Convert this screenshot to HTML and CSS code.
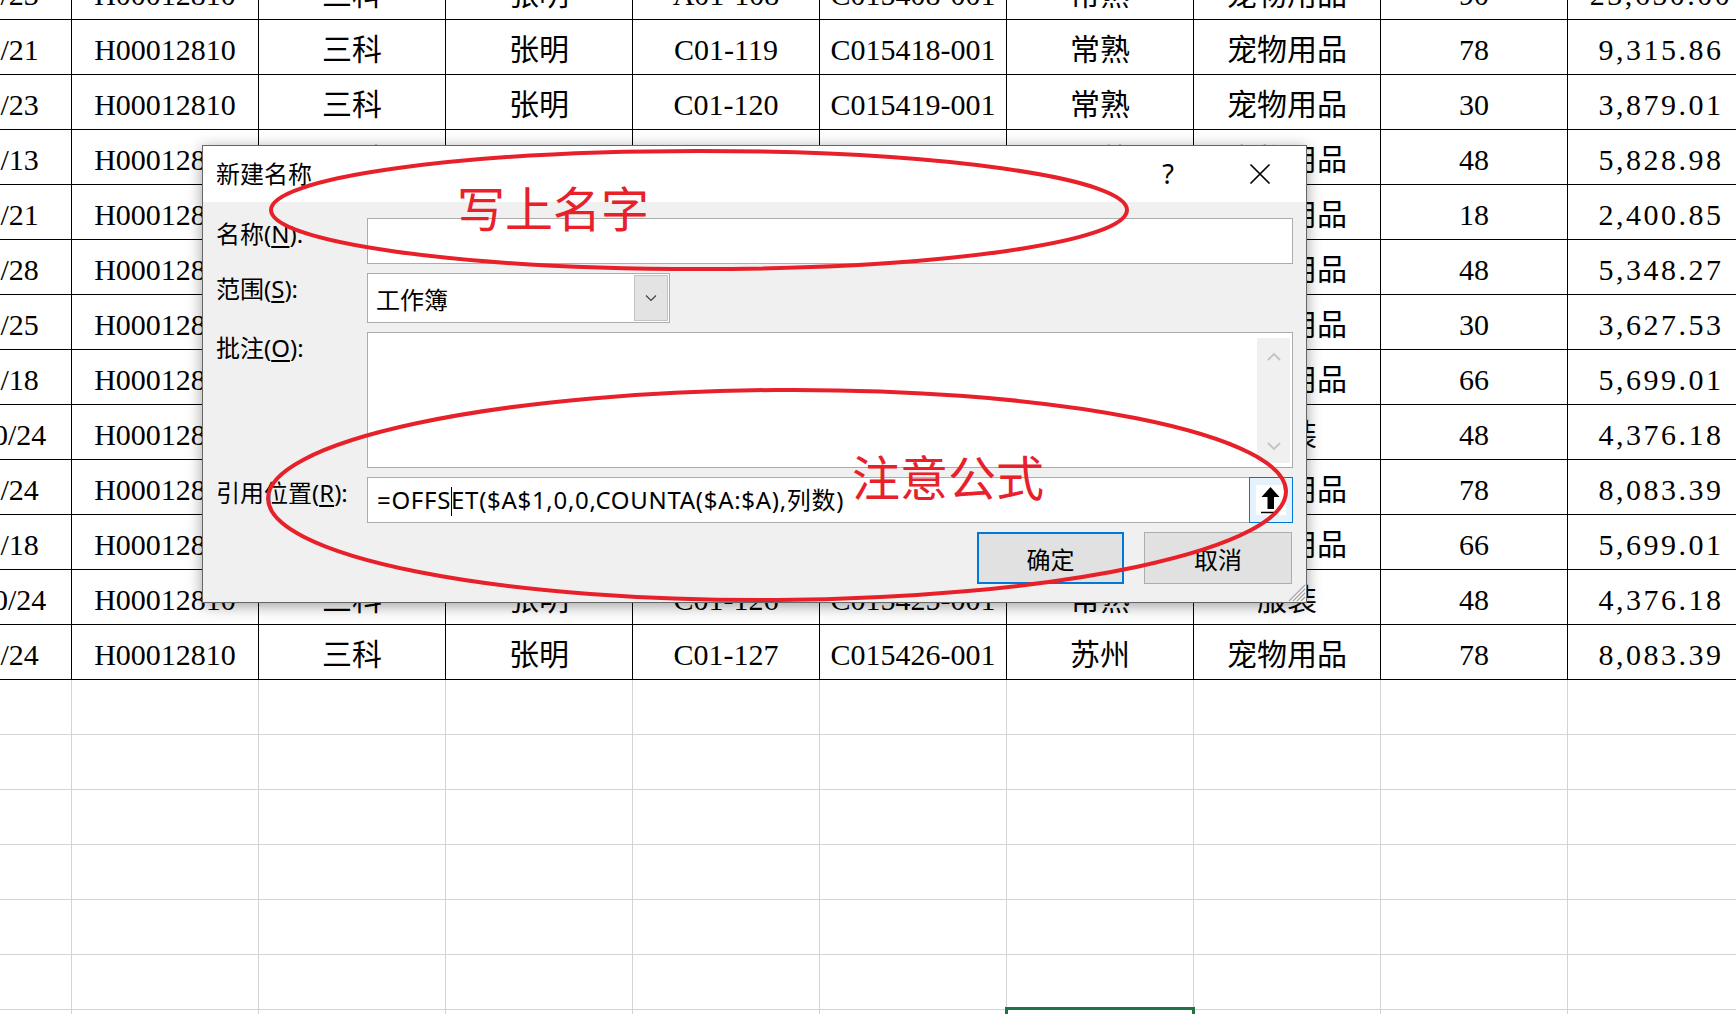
FILE: index.html
```html
<!DOCTYPE html>
<html lang="zh-CN">
<head>
<meta charset="utf-8">
<title>新建名称</title>
<link rel="stylesheet" href="styles.css">
</head>
<body>
<div class="sheet">
  <div class="row"><div class="c">2019/9/23</div><div class="c">H00012810</div><div class="c">三科</div><div class="c">张明</div><div class="c">A01-108</div><div class="c">C015408-001</div><div class="c">常熟</div><div class="c">宠物用品</div><div class="c">90</div><div class="c num">23,650.00</div></div>
  <div class="row"><div class="c">2019/9/21</div><div class="c">H00012810</div><div class="c">三科</div><div class="c">张明</div><div class="c">C01-119</div><div class="c">C015418-001</div><div class="c">常熟</div><div class="c">宠物用品</div><div class="c">78</div><div class="c num">9,315.86</div></div>
  <div class="row"><div class="c">2019/9/23</div><div class="c">H00012810</div><div class="c">三科</div><div class="c">张明</div><div class="c">C01-120</div><div class="c">C015419-001</div><div class="c">常熟</div><div class="c">宠物用品</div><div class="c">30</div><div class="c num">3,879.01</div></div>
  <div class="row"><div class="c">2019/9/13</div><div class="c">H00012810</div><div class="c">三科</div><div class="c">张明</div><div class="c">C01-121</div><div class="c">C015420-001</div><div class="c">常熟</div><div class="c">宠物用品</div><div class="c">48</div><div class="c num">5,828.98</div></div>
  <div class="row"><div class="c">2019/9/21</div><div class="c">H00012810</div><div class="c">三科</div><div class="c">张明</div><div class="c">C01-122</div><div class="c">C015421-001</div><div class="c">常熟</div><div class="c">宠物用品</div><div class="c">18</div><div class="c num">2,400.85</div></div>
  <div class="row"><div class="c">2019/9/28</div><div class="c">H00012810</div><div class="c">三科</div><div class="c">张明</div><div class="c">C01-123</div><div class="c">C015422-001</div><div class="c">常熟</div><div class="c">宠物用品</div><div class="c">48</div><div class="c num">5,348.27</div></div>
  <div class="row"><div class="c">2019/9/25</div><div class="c">H00012810</div><div class="c">三科</div><div class="c">张明</div><div class="c">C01-124</div><div class="c">C015423-001</div><div class="c">常熟</div><div class="c">宠物用品</div><div class="c">30</div><div class="c num">3,627.53</div></div>
  <div class="row"><div class="c">2019/9/18</div><div class="c">H00012810</div><div class="c">三科</div><div class="c">张明</div><div class="c">C01-125</div><div class="c">C015424-001</div><div class="c">常熟</div><div class="c">宠物用品</div><div class="c">66</div><div class="c num">5,699.01</div></div>
  <div class="row"><div class="c">2019/10/24</div><div class="c">H00012810</div><div class="c">三科</div><div class="c">张明</div><div class="c">C01-126</div><div class="c">C015425-001</div><div class="c">常熟</div><div class="c">服装</div><div class="c">48</div><div class="c num">4,376.18</div></div>
  <div class="row"><div class="c">2019/9/24</div><div class="c">H00012810</div><div class="c">三科</div><div class="c">张明</div><div class="c">C01-127</div><div class="c">C015426-001</div><div class="c">苏州</div><div class="c">宠物用品</div><div class="c">78</div><div class="c num">8,083.39</div></div>
  <div class="row"><div class="c">2019/9/18</div><div class="c">H00012810</div><div class="c">三科</div><div class="c">张明</div><div class="c">C01-125</div><div class="c">C015424-001</div><div class="c">常熟</div><div class="c">宠物用品</div><div class="c">66</div><div class="c num">5,699.01</div></div>
  <div class="row"><div class="c">2019/10/24</div><div class="c">H00012810</div><div class="c">三科</div><div class="c">张明</div><div class="c">C01-126</div><div class="c">C015425-001</div><div class="c">常熟</div><div class="c">服装</div><div class="c">48</div><div class="c num">4,376.18</div></div>
  <div class="row"><div class="c">2019/9/24</div><div class="c">H00012810</div><div class="c">三科</div><div class="c">张明</div><div class="c">C01-127</div><div class="c">C015426-001</div><div class="c">苏州</div><div class="c">宠物用品</div><div class="c">78</div><div class="c num">8,083.39</div></div>
  <div class="row empty"><div class="c"></div><div class="c"></div><div class="c"></div><div class="c"></div><div class="c"></div><div class="c"></div><div class="c"></div><div class="c"></div><div class="c"></div><div class="c"></div></div>
  <div class="row empty"><div class="c"></div><div class="c"></div><div class="c"></div><div class="c"></div><div class="c"></div><div class="c"></div><div class="c"></div><div class="c"></div><div class="c"></div><div class="c"></div></div>
  <div class="row empty"><div class="c"></div><div class="c"></div><div class="c"></div><div class="c"></div><div class="c"></div><div class="c"></div><div class="c"></div><div class="c"></div><div class="c"></div><div class="c"></div></div>
  <div class="row empty"><div class="c"></div><div class="c"></div><div class="c"></div><div class="c"></div><div class="c"></div><div class="c"></div><div class="c"></div><div class="c"></div><div class="c"></div><div class="c"></div></div>
  <div class="row empty"><div class="c"></div><div class="c"></div><div class="c"></div><div class="c"></div><div class="c"></div><div class="c"></div><div class="c"></div><div class="c"></div><div class="c"></div><div class="c"></div></div>
  <div class="row empty"><div class="c"></div><div class="c"></div><div class="c"></div><div class="c"></div><div class="c"></div><div class="c"></div><div class="c"></div><div class="c"></div><div class="c"></div><div class="c"></div></div>
  <div class="row empty last"><div class="c"></div><div class="c"></div><div class="c"></div><div class="c"></div><div class="c"></div><div class="c"></div><div class="c sel"></div><div class="c"></div><div class="c"></div><div class="c"></div></div>
</div>

<div class="dialog">
  <div class="titlebar">
    <div class="title">新建名称</div>
    <div class="tb-btn help">?</div>
    <div class="tb-btn close">
      <svg width="22" height="22" viewBox="0 0 22 22"><path d="M1.5 1.5 L20.5 20.5 M20.5 1.5 L1.5 20.5" stroke="#000" stroke-width="1.7" fill="none"/></svg>
    </div>
  </div>
  <div class="dbody">
    <div class="lbl">名称(<u>N</u>):</div>
    <div class="input"></div>
    <div class="lbl">范围(<u>S</u>):</div>
    <div class="combo">
      <div class="combo-text">工作簿</div>
      <div class="combo-btn"><svg width="12" height="8" viewBox="0 0 12 8"><path d="M1 1.5 L6 6.5 L11 1.5" stroke="#3c3c3c" stroke-width="1.1" fill="none"/></svg></div>
    </div>
    <div class="lbl">批注(<u>O</u>):</div>
    <div class="input memo">
      <div class="vscroll">
        <svg width="14" height="9" viewBox="0 0 14 9"><path d="M1 8 L7 2 L13 8" stroke="#c2c2c2" stroke-width="1.8" fill="none"/></svg>
        <svg width="14" height="9" viewBox="0 0 14 9"><path d="M1 1 L7 7 L13 1" stroke="#c2c2c2" stroke-width="1.8" fill="none"/></svg>
      </div>
    </div>
    <div class="lbl">引用位置(<u>R</u>):</div>
    <div class="input ref">
      <div class="ref-text"><span>=OFFS<i class="caret"></i>ET($A$1,0,0,COUNTA($A:$A),列数)</span></div>
      <div class="collapse">
        <div class="collapse-in">
          <svg width="30" height="30" viewBox="0 0 30 30"><path d="M5.5 12 L14.5 2 L23.5 12 L18 12 L18 24 L11.5 24 L11.5 12 Z" fill="#000"/><path d="M5 27.5 L21 27.5" stroke="#000" stroke-width="1.5"/></svg>
        </div>
      </div>
    </div>
    <div class="actions">
      <div class="btn ok">确定</div>
      <div class="btn">取消</div>
    </div>
  </div>
  <svg class="grip" width="20" height="20" viewBox="0 0 20 20">
    <path d="M19 3 L3 19 M19 7 L7 19 M19 11 L11 19 M19 15 L15 19" stroke="#a8a8a8" stroke-width="1.2"/>
    <path d="M20 4 L4 20 M20 8 L8 20 M20 12 L12 20 M20 16 L16 20" stroke="#ffffff" stroke-width="1"/>
  </svg>
</div>

<svg class="marks" width="1736" height="1014" viewBox="0 0 1736 1014">
  <ellipse cx="699" cy="210" rx="428" ry="59" fill="none" stroke="#e8202a" stroke-width="4"/>
  <ellipse cx="777" cy="495" rx="509" ry="105" fill="none" stroke="#e8202a" stroke-width="4" transform="rotate(-0.4 777 495)"/>
</svg>
<div class="note note1">写上名字</div>
<div class="note note2">注意公式</div>
</body>
</html>
```

FILE: styles.css
```css
* { box-sizing: border-box; }
html, body { margin: 0; padding: 0; overflow: hidden; }
body {
  width: 1736px;
  height: 1014px;
  background: #fff;
  position: relative;
  font-family: "Noto Sans", "Noto Sans CJK SC", sans-serif;
  color: #000;
}

/* spreadsheet */
.sheet {
  margin: -35px 0 0 -115px;
  height: 1049px;
  overflow: hidden;
  display: flex;
  flex-direction: column;
  font-family: "Liberation Serif", "Noto Sans CJK SC", serif;
  font-size: 30px;
}
.row {
  display: grid;
  grid-template-columns: repeat(10, 187px);
  height: 55px;
  flex: none;
}
.row.last { height: 14px; }
.c {
  border-right: 1px solid #000;
  border-bottom: 1px solid #000;
  display: flex;
  align-items: center;
  justify-content: center;
  padding-top: 6px;
  line-height: 34px;
  white-space: nowrap;
}
.c.num { letter-spacing: 2.5px; padding-left: 0; }
.row.empty .c { border-color: #d4d4d4; }
.row.last .c { border-bottom: 0; }
.c.sel { position: relative; }
.c.sel::after {
  content: "";
  position: absolute;
  left: -2px;
  right: -2px;
  top: -3px;
  bottom: 0;
  border: 3px solid #217346;
  border-bottom: 0;
}

/* dialog */
.dialog {
  position: absolute;
  left: 202px;
  top: 145px;
  width: 1105px;
  height: 458px;
  border: 1px solid #666;
  background: #f0f0f0;
  box-shadow: 0 3px 14px rgba(0, 0, 0, 0.38);
  display: flex;
  flex-direction: column;
  z-index: 2;
}
.titlebar {
  height: 56px;
  flex: none;
  background: #fff;
  display: flex;
  align-items: center;
}
.title {
  flex: 1;
  padding-left: 13px;
  font-family: "Noto Sans CJK SC", sans-serif;
  font-size: 24px;
  line-height: 30px;
  margin-top: -2px;
}
.tb-btn {
  width: 92px;
  height: 56px;
  display: flex;
  align-items: center;
  justify-content: center;
}
.help {
  font-family: "Noto Sans", sans-serif;
  font-size: 27px;
  line-height: 30px;
}
.close svg { display: block; }

.dbody {
  flex: 1;
  display: grid;
  grid-template-columns: 151px 1fr;
  grid-template-rows: 46px 50px 136px 46px 52px;
  row-gap: 9px;
  align-content: start;
  padding: 16px 13px 18px 13px;
}
.lbl {
  font-size: 24px;
  line-height: 32px;
  padding-top: 0;
  white-space: nowrap;
}
.lbl u {
  text-decoration-thickness: 1.5px;
  text-underline-offset: 3px;
}
.input {
  background: #fff;
  border: 1px solid #acacac;
}
.combo {
  width: 303px;
  display: flex;
  background: #fff;
  border: 1px solid #acacac;
  padding: 1px;
}
.combo-text {
  flex: 1;
  padding-left: 7px;
  font-family: "Noto Sans CJK SC", sans-serif;
  font-size: 24px;
  display: flex;
  align-items: center;
  padding-top: 1px;
}
.combo-btn {
  width: 34px;
  background: #e3e3e3;
  border: 1px solid #c4c4c4;
  display: flex;
  align-items: center;
  justify-content: center;
}
.memo {
  display: flex;
  justify-content: flex-end;
  padding: 5px 2px 4px 0;
}
.vscroll {
  width: 33px;
  background: #f0f0f0;
  display: flex;
  flex-direction: column;
  justify-content: space-between;
  align-items: center;
  padding: 14px 0 12px;
}
.vscroll svg { display: block; }
.ref {
  display: flex;
  align-items: stretch;
}
.ref-text {
  flex: 1;
  display: flex;
  align-items: center;
  padding-left: 9px;
  padding-bottom: 3px;
  font-size: 24px;
  letter-spacing: 0.7px;
  white-space: nowrap;
}
.caret {
  display: inline-block;
  width: 1px;
  height: 29px;
  background: #000;
  vertical-align: -7px;
  margin: 0 -1px 0 0;
}
.collapse {
  width: 44px;
  margin: -1px -1px -1px 0;
  border: 1px solid #0078d7;
  background: #e5f1fb;
  display: flex;
  align-items: center;
  justify-content: center;
}
.collapse-in {
  width: 30px;
  height: 30px;
  background: #fff;
}
.collapse-in svg { display: block; }
.actions {
  grid-column: 1 / -1;
  display: flex;
  justify-content: flex-end;
  gap: 20px;
  padding-right: 1px;
}
.btn {
  width: 148px;
  height: 52px;
  background: #e1e1e1;
  border: 1px solid #adadad;
  display: flex;
  align-items: center;
  justify-content: center;
  font-family: "Noto Sans CJK SC", sans-serif;
  font-size: 24px;
}
.btn.ok {
  width: 147px;
  border: 2px solid #0078d7;
}
.grip {
  position: absolute;
  right: 0;
  bottom: 0;
}

/* red annotations */
.marks {
  position: absolute;
  left: 0;
  top: 0;
  z-index: 3;
  pointer-events: none;
}
.note {
  position: absolute;
  z-index: 4;
  color: #e8202a;
  font-family: "Noto Sans CJK SC", sans-serif;
  font-size: 48px;
  line-height: 48px;
  white-space: nowrap;
}
.note1 { left: 457px; top: 182px; }
.note2 { left: 852px; top: 451px; }
```
